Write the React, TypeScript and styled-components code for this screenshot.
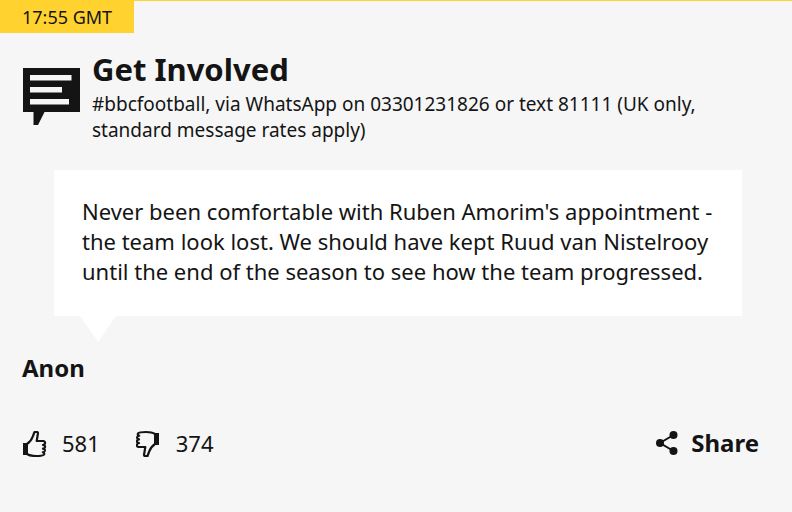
import React from "react";
import styled, { createGlobalStyle } from "styled-components";

const GlobalStyle = createGlobalStyle`
  *, *::before, *::after { box-sizing: border-box; }
  body {
    margin: 0;
    background: #f6f6f6;
    color: #141414;
    font-family: "Noto Sans", "Open Sans", sans-serif;
  }
`;

const Post = styled.article`
  border-top: 1px solid #ffd230;
  padding-bottom: 48px;
`;

const Timestamp = styled.time`
  display: block;
  width: fit-content;
  padding: 0 22px;
  background: #ffd230;
  font-size: 18px;
  line-height: 32px;
`;

const Header = styled.header`
  display: flex;
  gap: 12px;
  padding: 18px 60px 0 23px;
`;

const CommentIcon = styled.svg`
  flex: none;
  width: 57px;
  height: 57px;
  margin-top: 17px;
`;

const Title = styled.h2`
  margin: 0;
  font-size: 31px;
  line-height: 36px;
  font-weight: 700;
`;

const Contact = styled.p`
  margin: 4px 0 0;
  font-size: 19px;
  line-height: 26px;
`;

const Quote = styled.blockquote`
  position: relative;
  margin: 27px 50px 0 54px;
  padding: 26px 28px 30px;
  background: #ffffff;
  font-size: 22px;
  line-height: 30px;

  &::after {
    content: "";
    position: absolute;
    top: 100%;
    left: 26px;
    border: 18px solid transparent;
    border-top: 26px solid #ffffff;
    border-bottom: 0;
  }
`;

const QuoteText = styled.p`
  margin: 0;
`;

const Author = styled.p`
  margin: 36px 22px 0;
  font-size: 24px;
  line-height: 32px;
  font-weight: 700;
`;

const Footer = styled.footer`
  display: flex;
  align-items: center;
  gap: 36px;
  margin-top: 43px;
  padding: 0 33px 0 22px;
`;

const Action = styled.button<{ $strong?: boolean }>`
  display: flex;
  align-items: center;
  gap: ${({ $strong }) => ($strong ? 12 : 14)}px;
  margin: 0 0 0 ${({ $strong }) => ($strong ? "auto" : 0)};
  padding: 0;
  border: 0;
  background: none;
  color: inherit;
  font: inherit;
  font-size: ${({ $strong }) => ($strong ? 24 : 22)}px;
  font-weight: ${({ $strong }) => ($strong ? 700 : 400)};
  line-height: 32px;
  cursor: pointer;
`;

const ActionIcon = styled.svg`
  flex: none;
  width: 26px;
  height: 28px;
`;

function Thumb({ down }: { down?: boolean }) {
  return (
    <ActionIcon viewBox="0 0 26 28" aria-hidden="true">
      <g transform={down ? "rotate(180 12 14.500)" : "translate(0 1)"}>
        <path d="M1 13h5v12H1z" fill="#141414" />
        <path
          d="M5 14 C8 12 10 9 11 6 L12.5 2 H15.5 L16 3 L14.7 11 H21.5 Q23.5 11.5 23 13.5 Q22.8 14.5 21 15 Q23.5 15.5 23 17.2 Q22.7 18.5 21 18.7 Q23.3 19.2 22.8 21 Q22.4 22.2 20.8 22.3 Q22.8 23 22 24.6 Q20.8 26 14 26 Q8 26 5 24"
          fill="none"
          stroke="#141414"
          strokeWidth="2.2"
          strokeLinejoin="round"
        />
      </g>
    </ActionIcon>
  );
}

function ShareIcon() {
  return (
    <ActionIcon viewBox="0 0 26 28" aria-hidden="true">
      <path d="M20.500 6 L7 14 L20.500 22" fill="none" stroke="#141414" strokeWidth="2" />
      <circle cx="20.500" cy="6" r="4" fill="#141414" />
      <circle cx="7" cy="14" r="4" fill="#141414" />
      <circle cx="20.500" cy="22" r="4" fill="#141414" />
    </ActionIcon>
  );
}

export default function App() {
  return (
    <>
      <GlobalStyle />
      <Post>
        <Timestamp dateTime="17:55">17:55 GMT</Timestamp>
        <Header>
          <CommentIcon viewBox="0 0 57 57" aria-hidden="true">
            <path
              fillRule="evenodd"
              fill="#141414"
              d="M0 0H57V44H21.500L15 57H10.500V44H0Z M7 7V12.500H48.500V7Z M7 19V24.500H39V19Z M7 31V36.500H46V31Z"
            />
          </CommentIcon>
          <div>
            <Title>Get Involved</Title>
            <Contact>
              #bbcfootball, via WhatsApp on 03301231826 or text 81111 (UK only, standard message rates apply)
            </Contact>
          </div>
        </Header>
        <Quote>
          <QuoteText>
            Never been comfortable with Ruben Amorim's appointment - the team look lost. We should have kept Ruud van
            Nistelrooy until the end of the season to see how the team progressed.
          </QuoteText>
        </Quote>
        <Author>Anon</Author>
        <Footer>
          <Action type="button" aria-label="Like, 581">
            <Thumb />
            581
          </Action>
          <Action type="button" aria-label="Dislike, 374">
            <Thumb down />
            374
          </Action>
          <Action type="button" $strong>
            <ShareIcon />
            Share
          </Action>
        </Footer>
      </Post>
    </>
  );
}
